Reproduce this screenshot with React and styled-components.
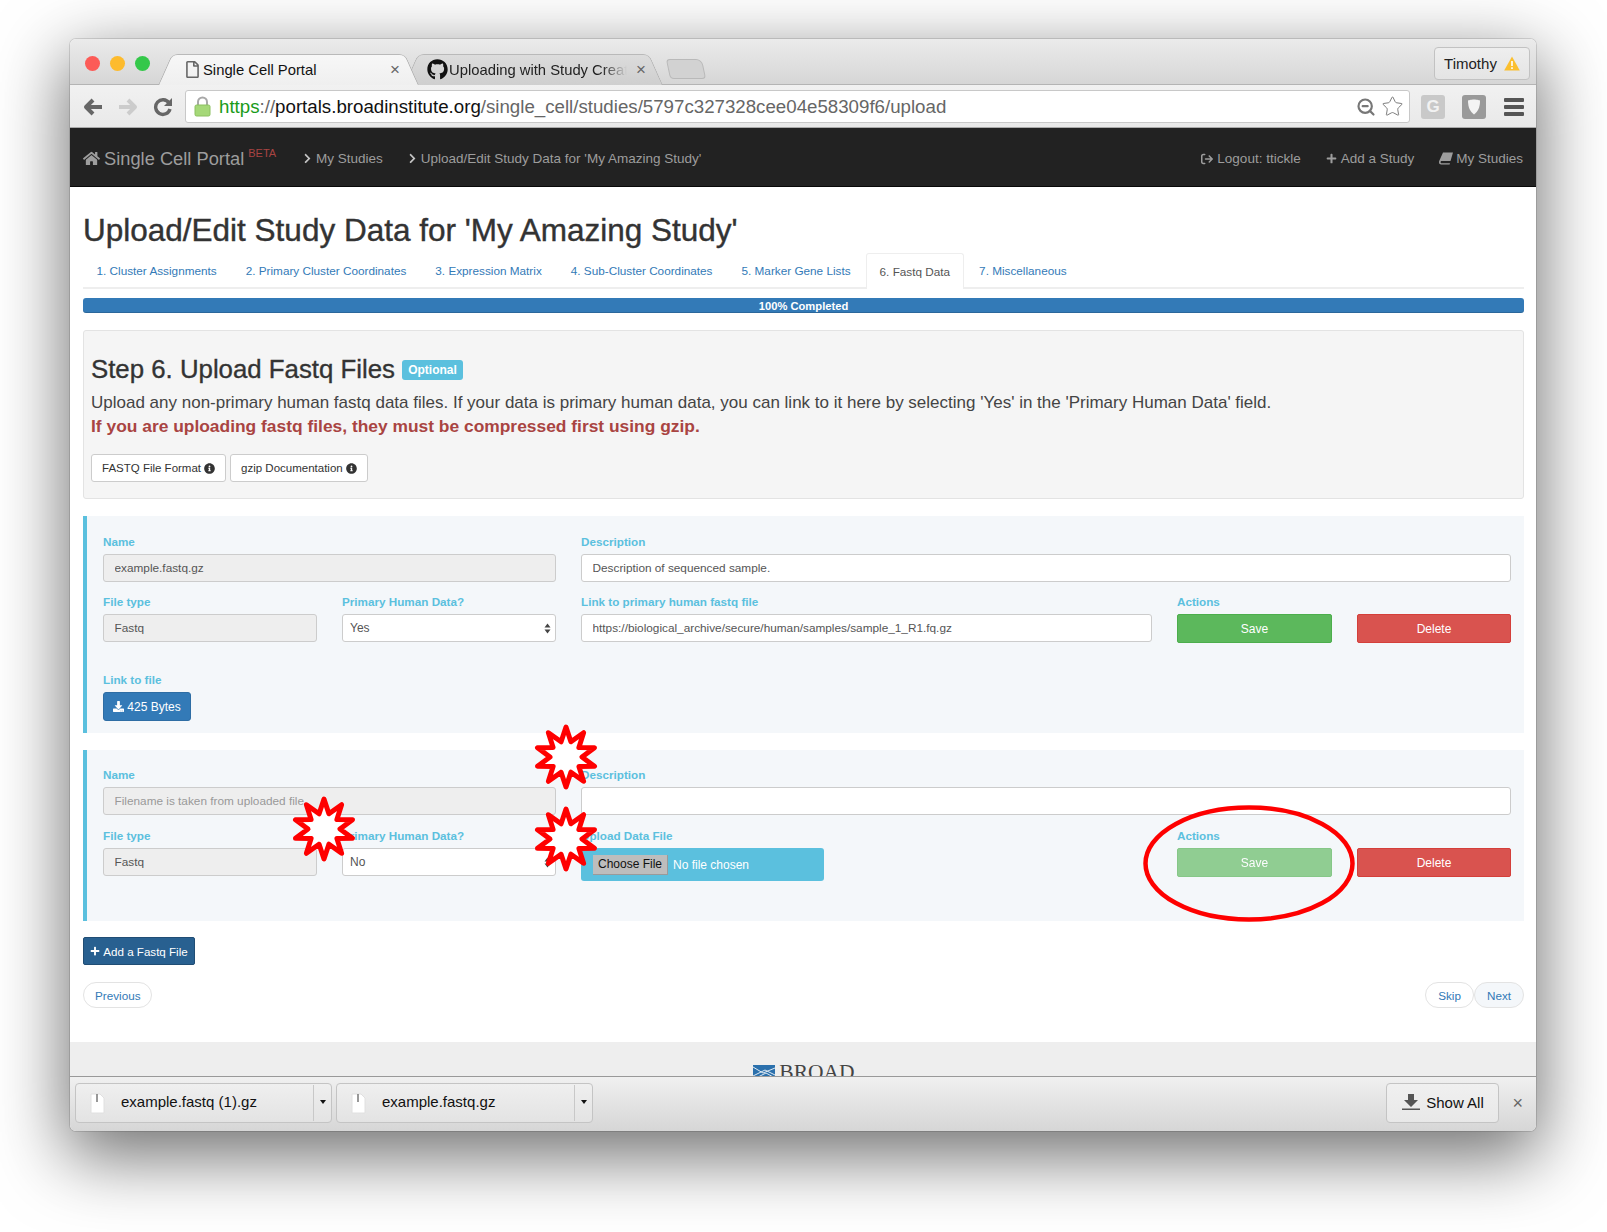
import React from "react";
import styled, { createGlobalStyle } from "styled-components";
import { FaHome, FaChevronRight, FaPlus, FaInfoCircle, FaDownload, FaGithub, FaRegFile } from "react-icons/fa";
import { FaArrowRightFromBracket } from "react-icons/fa6";
import { ZoomOut, Star as StarIcon } from "lucide-react";

const Global = createGlobalStyle`
  html, body { margin: 0; padding: 0; background: #fff; }
  body { font-family: "Liberation Sans", Arial, sans-serif; color: #333; }
  * { box-sizing: border-box; }
`;

const Page = styled.div`
  width: 1607px;
  height: 1232px;
  padding: 39px 71px 0 70px;
  overflow: hidden;
`;

const Window = styled.div`
  height: 1092px;
  display: flex;
  flex-direction: column;
  border-radius: 6px;
  overflow: hidden;
  background: #fff;
  box-shadow: 0 22px 70px 4px rgba(0, 0, 0, 0.56), 0 0 0 1px rgba(0, 0, 0, 0.12);
`;

/* browser chrome */
const TabStrip = styled.div`
  height: 46px;
  flex: none;
  display: flex;
  align-items: flex-end;
  padding: 0 6px 0 15px;
  background: linear-gradient(#ebebeb, #d6d6d6);
  border-bottom: 1px solid #b4b4b4;
`;

const Lights = styled.div`
  display: flex;
  gap: 10px;
  align-self: flex-start;
  margin-top: 17px;
  width: 72px;
`;

const Light = styled.span`
  width: 15px;
  height: 15px;
  flex: none;
  border-radius: 50%;
  background: ${(p) => p.$color};
`;

const BrowserTab = styled.div`
  position: relative;
  width: ${(p) => p.$width}px;
  height: 31px;
  margin-left: ${(p) => p.$left || 0}px;
  margin-bottom: -1px;
  display: flex;
  align-items: center;
  padding-left: ${(p) => p.$pad}px;
  font-size: 14.8px;
  color: ${(p) => (p.$active ? "#111" : "#222")};
  z-index: ${(p) => (p.$active ? 2 : 1)};
  &::before, &::after {
    content: "";
    position: absolute;
    top: 0;
    bottom: 0;
    width: 55%;
    z-index: -1;
    background: ${(p) => (p.$active ? "linear-gradient(#f7f7f7, #efefef)" : "linear-gradient(#dcdcdc, #cfcfcf)")};
    border-top: 1px solid #b9b9b9;
  }
  &::before {
    left: 8px;
    transform: skewX(-24deg);
    border-left: 1px solid #b0b0b0;
    border-top-left-radius: 6px;
  }
  &::after {
    right: 8px;
    transform: skewX(24deg);
    border-right: 1px solid #b0b0b0;
    border-top-right-radius: 6px;
  }
`;

const TabTitle = styled.span`
  white-space: nowrap;
  overflow: hidden;
  width: ${(p) => p.$width}px;
  margin-left: ${(p) => p.$gap}px;
  ${(p) => p.$fade && "-webkit-mask-image: linear-gradient(90deg, #000 86%, transparent 100%);"}
`;

const TabClose = styled.span`
  position: absolute;
  left: ${(p) => p.$x}px;
  top: 6px;
  font-size: 17px;
  color: #666;
`;

const NewTab = styled.div`
  width: 36px;
  height: 20px;
  margin: 0 0 5px 4px;
  background: #d2d2d2;
  border: 1px solid #b9b9b9;
  border-radius: 4px 6px 4px 4px;
  transform: skewX(12deg);
`;

const Profile = styled.div`
  margin-left: auto;
  align-self: flex-start;
  margin-top: 8px;
  width: 96px;
  height: 33px;
  display: flex;
  align-items: center;
  justify-content: center;
  gap: 7px;
  font-size: 15px;
  color: #222;
  background: linear-gradient(#eee, #e4e4e4);
  border: 1px solid #c2c2c2;
  border-radius: 4px;
`;

const Toolbar = styled.div`
  height: 43px;
  flex: none;
  display: flex;
  align-items: center;
  background: linear-gradient(#f1f1f1, #e9e9e9);
  border-bottom: 1px solid #aaa;
  padding: 1px 0 0 13px;
`;

const NavIcons = styled.div`
  width: 102px;
  display: flex;
  align-items: center;
  gap: 15px;
`;

const UrlBox = styled.div`
  width: 1225px;
  height: 33px;
  display: flex;
  align-items: center;
  padding: 0 5px 0 8px;
  background: #fff;
  border: 1px solid #c8c8c8;
  border-radius: 3px;
  font-size: 18.7px;
  white-space: pre;
  color: #666;
`;

const Https = styled.span`
  color: #1a9b1a;
  margin-left: 8px;
`;

const Host = styled.span`
  color: #111;
`;

const UrlIcons = styled.div`
  margin-left: auto;
  display: flex;
  align-items: center;
  gap: 5px;
  color: #777;
`;

const ExtBox = styled.div`
  width: 24px;
  height: 24px;
  margin-left: ${(p) => p.$left}px;
  display: flex;
  align-items: center;
  justify-content: center;
  border-radius: 3px;
  background: ${(p) => p.$bg};
  color: #f2f2f2;
  font-weight: bold;
  font-size: 17px;
`;

const Burger = styled.div`
  width: 20px;
  margin-left: 18px;
  display: flex;
  flex-direction: column;
  gap: 3px;
  span {
    height: 4px;
    border-radius: 1px;
    background: #555;
  }
`;

/* site navbar */
const Navbar = styled.nav`
  height: 59px;
  flex: none;
  display: flex;
  align-items: center;
  padding: 3px 13px 0;
  background: #222;
  border-bottom: 1px solid #080808;
  color: #9d9d9d;
  font-size: 13.5px;
  white-space: nowrap;
`;

const Brand = styled.div`
  display: flex;
  align-items: center;
  font-size: 18.3px;
  gap: 4px;
  width: 220px;
`;

const Beta = styled.sup`
  align-self: flex-start;
  margin: -1px 0 0 0;
  color: #a94442;
  font-size: 11px;
`;

const NavLink = styled.div`
  display: flex;
  align-items: center;
  gap: ${(p) => p.$gap || 4}px;
  margin-left: ${(p) => p.$left || 0}px;
`;

const NavRight = styled.div`
  margin-left: auto;
  display: flex;
  align-items: center;
  gap: 25px;
`;

/* page */
const Main = styled.main`
  flex: 1;
  min-height: 0;
  padding: 0 12px 0 13px;
  position: relative;
`;

const Title = styled.h1`
  height: 66px;
  margin: 0;
  padding-top: 24px;
  font-size: 31.5px;
  line-height: 38px;
  font-weight: 400;
  color: #333;
  -webkit-text-stroke: 0.4px #333;
`;

const Tabs = styled.div`
  height: 36px;
  display: flex;
  border-bottom: 2px solid #eee;
  font-size: 11.75px;
`;

const TabLink = styled.div`
  height: 36px;
  padding: 0 ${(p) => (p.$active ? 12.5 : 13.5)}px;
  margin-right: 2px;
  line-height: 35px;
  color: ${(p) => (p.$active ? "#555" : "#337ab7")};
  ${(p) => p.$active && "background: #fff; border: 1px solid #eee; border-bottom: 0; border-radius: 3px 3px 0 0;"}
`;

const Progress = styled.div`
  height: 15px;
  margin-top: 9px;
  background: #337ab7;
  border-radius: 3px;
  color: #fff;
  font-size: 11.2px;
  line-height: 16px;
  font-weight: bold;
  text-align: center;
  box-shadow: inset 0 -1px 0 rgba(0, 0, 0, 0.15);
`;

const Well = styled.section`
  height: 169px;
  margin-top: 17px;
  padding: 0 7px;
  background: #f5f5f5;
  border: 1px solid #e3e3e3;
  border-radius: 3px;
`;

const StepHead = styled.div`
  display: flex;
  align-items: center;
  gap: 7px;
  padding-top: 22px;
  height: 55px;
`;

const StepTitle = styled.h2`
  margin: 0;
  font-size: 25.8px;
  font-weight: 400;
  -webkit-text-stroke: 0.35px #333;
`;

const Badge = styled.span`
  width: 61px;
  height: 20px;
  margin-top: 1px;
  background: #5bc0de;
  border-radius: 3px;
  color: #fff;
  font-size: 12px;
  font-weight: bold;
  line-height: 20px;
  text-align: center;
`;

const Lead = styled.p`
  margin: 5px 0 0;
  font-size: 17px;
  line-height: 24px;
  color: #444;
`;

const Warn = styled.p`
  margin: 0;
  font-size: 17.4px;
  line-height: 23px;
  font-weight: bold;
  color: #a94442;
`;

const Refs = styled.div`
  display: flex;
  gap: 4px;
  margin-top: 16px;
`;

const RefButton = styled.button`
  height: 28px;
  padding: 0 10px;
  display: flex;
  align-items: center;
  gap: 3px;
  background: #fff;
  border: 1px solid #ccc;
  border-radius: 3px;
  font: 11.5px "Liberation Sans", sans-serif;
  color: #333;
`;

const Panel = styled.section`
  position: relative;
  height: ${(p) => p.$height}px;
  margin-top: ${(p) => p.$top}px;
  padding: ${(p) => p.$pad}px 13px 0 16px;
  background: #f4f7fa;
  border-left: 4px solid #5bc0de;
`;

const FieldGrid = styled.div`
  display: grid;
  grid-template-columns: 214px 214px 571px 155px 154px;
  column-gap: 25px;
  row-gap: ${(p) => p.$rowGap}px;
`;

const Field = styled.div`
  grid-column: span ${(p) => p.$span || 1};
  display: flex;
  flex-direction: column;
`;

const Label = styled.label`
  display: block;
  height: 21px;
  font-size: 11.7px;
  line-height: 18px;
  font-weight: bold;
  color: #5bc0de;
  white-space: nowrap;
`;

const TextInput = styled.input`
  width: 100%;
  height: 28px;
  padding: 0 10.5px;
  border: 1px solid #ccc;
  border-radius: 3px;
  background: ${(p) => (p.readOnly ? "#eee" : "#fff")};
  color: #555;
  font: 11.8px "Liberation Sans", sans-serif;
  outline: none;
  &::placeholder { color: #999; opacity: 1; }
`;

const SelectBox = styled.div`
  height: 28px;
  display: flex;
  align-items: center;
  justify-content: space-between;
  padding: 0 4px 0 7px;
  background: #fff;
  border: 1px solid #ccc;
  border-radius: 3px;
  color: #555;
  font-size: 12px;
`;

const ActionButton = styled.button`
  width: 100%;
  height: 29px;
  border: 1px solid ${(p) => p.$border};
  border-radius: 2px;
  background: ${(p) => p.$bg};
  color: #fff;
  font: 12px "Liberation Sans", sans-serif;
  opacity: ${(p) => (p.disabled ? 0.65 : 1)};
`;

const FileLink = styled.div`
  margin-top: 17px;
  grid-column: span 5;
`;

const DownloadButton = styled.button`
  width: 88px;
  height: 29px;
  display: flex;
  align-items: center;
  justify-content: center;
  gap: 3px;
  background: #337ab7;
  border: 1px solid #2e6da4;
  border-radius: 3px;
  color: #fff;
  font: 12px "Liberation Sans", sans-serif;
`;

const UploadBox = styled.div`
  width: 243px;
  height: 33px;
  display: flex;
  align-items: center;
  padding-left: 12px;
  gap: 5px;
  background: #5bc0de;
  border-radius: 3px;
  color: #fff;
  font-size: 12px;
`;

const ChooseFile = styled.button`
  width: 75px;
  height: 20px;
  padding: 0;
  background: #bdbdbd;
  border: 1px solid #9a9a9a;
  border-width: 0 1px 1px 0;
  font: 12px "Liberation Sans", sans-serif;
  color: #111;
`;

const AddButton = styled.button`
  width: 112px;
  height: 28px;
  margin-top: 16px;
  padding: 0;
  display: flex;
  align-items: center;
  justify-content: center;
  gap: 3px;
  white-space: nowrap;
  background: #286090;
  border: 1px solid #204d74;
  border-radius: 2px;
  color: #fff;
  font: 11.6px "Liberation Sans", sans-serif;
`;

const Pager = styled.div`
  display: flex;
  margin-top: 17px;
`;

const Pill = styled.button`
  height: 26px;
  padding: 0 ${(p) => p.$pad || 12}px;
  margin-left: ${(p) => (p.$push ? "auto" : 0)};
  background: ${(p) => p.$bg || "#fff"};
  border: 1px solid #e3e3e3;
  border-radius: 13px;
  color: #337ab7;
  font: 11.7px "Liberation Sans", sans-serif;
`;

const Footer = styled.footer`
  height: 34px;
  flex: none;
  overflow: hidden;
  display: flex;
  justify-content: center;
  align-items: flex-start;
  gap: 4px;
  padding: 18px 0 0 2px;
  background: #eee;
`;

const BroadText = styled.span`
  font-family: "Liberation Serif", serif;
  font-size: 21.5px;
  line-height: 24px;
  color: #444;
`;

const Shelf = styled.div`
  height: 55px;
  flex: none;
  display: flex;
  align-items: center;
  padding: 0 13px 2px 5px;
  gap: 4px;
  background: linear-gradient(#f0f0f0, #d6d6d6);
  border-top: 1px solid #999;
`;

const DownloadItem = styled.div`
  width: 257px;
  height: 40px;
  display: flex;
  align-items: center;
  padding: 0 0 0 14px;
  background: linear-gradient(#efefef, #e3e3e3);
  border: 1px solid #c4c4c4;
  border-radius: 4px;
  font-size: 15px;
  color: #111;
`;

const ItemName = styled.span`
  margin: 0 0 3px 16px;
  flex: 1;
`;

const Caret = styled.span`
  width: 18px;
  height: 36px;
  display: flex;
  align-items: center;
  justify-content: center;
  border-left: 1px solid #c8c8c8;
  &::after {
    content: "";
    border: 3px solid transparent;
    border-top: 4px solid #111;
    margin-top: 1px;
  }
`;

const ShowAll = styled.button`
  margin-left: auto;
  width: 113px;
  height: 40px;
  padding: 0 0 2px;
  display: flex;
  align-items: center;
  justify-content: center;
  gap: 6px;
  background: linear-gradient(#f0f0f0, #e8e8e8);
  border: 1px solid #c4c4c4;
  border-radius: 4px;
  font: 15px "Liberation Sans", sans-serif;
  color: #111;
`;

const ShelfClose = styled.span`
  margin: 0 0 0 9px;
  font-size: 18px;
  color: #666;
`;

/* markup drawn over the screenshot */
const Markup = styled.svg`
  position: absolute;
  left: ${(p) => p.$x}px;
  top: ${(p) => p.$y}px;
  overflow: visible;
  z-index: 5;
`;

const starPoints = (r, inner, n = 10) =>
  Array.from({ length: n * 2 }, (_, i) => {
    const a = (Math.PI * i) / n - Math.PI / 2;
    const d = i % 2 ? inner : r;
    return `${(r + d * Math.cos(a)).toFixed(1)},${(r + d * Math.sin(a)).toFixed(1)}`;
  }).join(" ");

// x, y are relative to the main content box
const Burst = ({ x, y }) => (
  <Markup $x={x - 30} $y={y - 30} width="60" height="60" viewBox="0 0 60 60">
    <polygon points={starPoints(30, 16)} fill="#fff" stroke="#fe0000" strokeWidth="5" strokeLinejoin="round" />
  </Markup>
);

const SortArrows = () => (
  <svg width="7" height="11" viewBox="0 0 7 11"><path d="M3.5 0.5 6.5 4.5H.5zM3.5 10.5.5 6.5h6z" fill="#444" /></svg>
);

const FileGlyph = () => (
  <svg width="15" height="21" viewBox="0 0 15 21">
    <path d="M1 1h9l4 4v15H1z" fill="#fff" stroke="#e0e0e0" />
    <path d="M7 1v8" stroke="#777" strokeWidth="1.5" />
  </svg>
);

const Lock = () => (
  <svg width="17" height="21" viewBox="0 0 17 21">
    <path d="M4 10V6a4.5 4.5 0 0 1 9 0v4" fill="none" stroke="#a8a8a8" strokeWidth="2" />
    <rect x="1" y="9" width="15" height="11" rx="1.5" fill="#a5d878" stroke="#8cc060" />
  </svg>
);

const Arrow = ({ color, flip }) => (
  <svg width="20" height="18" viewBox="0 0 20 18" style={flip ? { transform: "scaleX(-1)" } : undefined}>
    <path d="M10 2 3 9l7 7M3 9h16" fill="none" stroke={color} strokeWidth="4" strokeLinejoin="round" />
  </svg>
);

const Reload = () => (
  <svg width="20" height="20" viewBox="0 0 20 20">
    <path d="M16 6a7.3 7.3 0 1 0 1 6" fill="none" stroke="#666" strokeWidth="3.4" />
    <path d="M19 1v8h-8z" fill="#666" />
  </svg>
);

const WarnTriangle = () => (
  <svg width="16" height="15" viewBox="0 0 16 15">
    <path d="M8 .5 15.8 14.5H.2z" fill="#fbbf2e" />
    <path d="M8 5v5M8 11.2v1.8" stroke="#fff" strokeWidth="1.6" />
  </svg>
);

// slanted book, as the glyphicon draws it
const SlantBook = () => (
  <svg width="14" height="13" viewBox="0 0 14 13">
    <path d="M4 .5h10L11.5 9H2.8C2 9 1.6 9.6 1.6 10.2s.4 1 1.2 1H11l-.4 1.3H2.2C.9 12.5 0 11.5 0 10.2c0-.5.1-.9.2-1.3z" fill="#9d9d9d" />
  </svg>
);

const BroadLogo = () => (
  <svg width="22" height="13" viewBox="0 0 22 13" style={{ marginTop: 5 }}>
    <rect width="22" height="13" fill="#2b70ac" />
    <path d="M0 2 10 8 22 3M0 11 12 5 22 10M3 13 13 8 22 13" fill="none" stroke="#dfe9f2" strokeWidth="1" />
  </svg>
);

const wizardTabs = [
  "1. Cluster Assignments",
  "2. Primary Cluster Coordinates",
  "3. Expression Matrix",
  "4. Sub-Cluster Coordinates",
  "5. Marker Gene Lists",
  "6. Fastq Data",
  "7. Miscellaneous",
];

export default function App() {
  return (
    <Page>
      <Global />
      <Window>
        <TabStrip>
          <Lights>
            <Light $color="#fc5b57" />
            <Light $color="#fdbb2d" />
            <Light $color="#34c84a" />
          </Lights>
          <BrowserTab $active $width={263} $pad={27}>
            <FaRegFile size={17} color="#666" />
            <TabTitle $width={150} $gap={2}>Single Cell Portal</TabTitle>
            <TabClose $x={233}>×</TabClose>
          </BrowserTab>
          <BrowserTab $width={261} $left={-17} $pad={24}>
            <FaGithub size={21} color="#111" />
            <TabTitle $width={178} $gap={1} $fade>Uploading with Study Creation</TabTitle>
            <TabClose $x={233}>×</TabClose>
          </BrowserTab>
          <NewTab />
          <Profile>Timothy <WarnTriangle /></Profile>
        </TabStrip>
        <Toolbar>
          <NavIcons>
            <Arrow color="#666" />
            <Arrow color="#ccc" flip />
            <Reload />
          </NavIcons>
          <UrlBox>
            <Lock />
            <Https>https</Https>://<Host>portals.broadinstitute.org</Host>/single_cell/studies/5797c327328cee04e58309f6/upload
            <UrlIcons>
              <ZoomOut size={20} strokeWidth={2.6} />
              <StarIcon size={23} strokeWidth={1} />
            </UrlIcons>
          </UrlBox>
          <ExtBox $left={11} $bg="#c9c9c9">G</ExtBox>
          <ExtBox $left={17} $bg="#9a9a9a">
            <svg width="14" height="16" viewBox="0 0 14 16"><path d="M7 .5c3 0 6 1 6 1 0 7-2 11-6 14-4-3-6-7-6-14 0 0 3-1 6-1z" fill="#f4f4f4" /></svg>
          </ExtBox>
          <Burger><span /><span /><span /></Burger>
        </Toolbar>
        <Navbar>
          <Brand><FaHome size={17} />Single Cell Portal<Beta>BETA</Beta></Brand>
          <NavLink $gap={3} $left={-1}><FaChevronRight size={11} color="#c4c4c4" />My Studies</NavLink>
          <NavLink $gap={3} $left={24}><FaChevronRight size={11} color="#c4c4c4" />Upload/Edit Study Data for 'My Amazing Study'</NavLink>
          <NavRight>
            <NavLink><FaArrowRightFromBracket size={12} />Logout: ttickle</NavLink>
            <NavLink><FaPlus size={11} />Add a Study</NavLink>
            <NavLink $gap={3}><SlantBook />My Studies</NavLink>
          </NavRight>
        </Navbar>
        <Main>
          <Title>Upload/Edit Study Data for 'My Amazing Study'</Title>
          <Tabs>
            {wizardTabs.map((t) => (
              <TabLink key={t} $active={t.startsWith("6")}>{t}</TabLink>
            ))}
          </Tabs>
          <Progress>100% Completed</Progress>
          <Well>
            <StepHead>
              <StepTitle>Step 6. Upload Fastq Files</StepTitle>
              <Badge>Optional</Badge>
            </StepHead>
            <Lead>Upload any non-primary human fastq data files. If your data is primary human data, you can link to it here by selecting 'Yes' in the 'Primary Human Data' field.</Lead>
            <Warn>If you are uploading fastq files, they must be compressed first using gzip.</Warn>
            <Refs>
              <RefButton>FASTQ File Format <FaInfoCircle size={11} /></RefButton>
              <RefButton>gzip Documentation <FaInfoCircle size={11} /></RefButton>
            </Refs>
          </Well>

          <Panel $height={217} $top={17} $pad={17}>
            <FieldGrid $rowGap={11}>
              <Field $span={2}><Label>Name</Label><TextInput readOnly defaultValue="example.fastq.gz" /></Field>
              <Field $span={3}><Label>Description</Label><TextInput defaultValue="Description of sequenced sample." /></Field>
              <Field><Label>File type</Label><TextInput readOnly defaultValue="Fastq" /></Field>
              <Field><Label>Primary Human Data?</Label><SelectBox>Yes <SortArrows /></SelectBox></Field>
              <Field><Label>Link to primary human fastq file</Label><TextInput defaultValue="https://biological_archive/secure/human/samples/sample_1_R1.fq.gz" /></Field>
              <Field><Label>Actions</Label><ActionButton $bg="#5cb85c" $border="#4cae4c">Save</ActionButton></Field>
              <Field><Label>&nbsp;</Label><ActionButton $bg="#d9534f" $border="#d43f3a">Delete</ActionButton></Field>
              <FileLink>
                <Label>Link to file</Label>
                <DownloadButton><FaDownload size={11} /> 425 Bytes</DownloadButton>
              </FileLink>
            </FieldGrid>
          </Panel>

          <Panel $height={171} $top={17} $pad={16}>
            <FieldGrid $rowGap={12}>
              <Field $span={2}><Label>Name</Label><TextInput readOnly placeholder="Filename is taken from uploaded file" /></Field>
              <Field $span={3}><Label>Description</Label><TextInput /></Field>
              <Field><Label>File type</Label><TextInput readOnly defaultValue="Fastq" /></Field>
              <Field><Label>Primary Human Data?</Label><SelectBox>No <SortArrows /></SelectBox></Field>
              <Field><Label>Upload Data File</Label><UploadBox><ChooseFile>Choose File</ChooseFile>No file chosen</UploadBox></Field>
              <Field><Label>Actions</Label><ActionButton disabled $bg="#5cb85c" $border="#4cae4c">Save</ActionButton></Field>
              <Field><Label>&nbsp;</Label><ActionButton $bg="#d9534f" $border="#d43f3a">Delete</ActionButton></Field>
            </FieldGrid>
          </Panel>

          <AddButton><FaPlus size={10} /> Add a Fastq File</AddButton>
          <Pager>
            <Pill $pad={11}>Previous</Pill>
            <Pill $push>Skip</Pill>
            <Pill $bg="#f4f7fa">Next</Pill>
          </Pager>

          <Burst x={496} y={570} />
          <Burst x={254} y={642} />
          <Burst x={496} y={652} />
          <Markup $x={1074} $y={620} width="212" height="115" viewBox="0 0 212 115">
            <ellipse cx="105" cy="56.5" rx="103.5" ry="56" fill="none" stroke="#fe0000" strokeWidth="4.5" />
          </Markup>
        </Main>
        <Footer><BroadLogo /><BroadText>BROAD</BroadText></Footer>
        <Shelf>
          <DownloadItem><FileGlyph /><ItemName>example.fastq (1).gz</ItemName><Caret /></DownloadItem>
          <DownloadItem><FileGlyph /><ItemName>example.fastq.gz</ItemName><Caret /></DownloadItem>
          <ShowAll>
            <svg width="18" height="16" viewBox="0 0 18 16"><path d="M6 0h6v6h4l-7 7-7-7h4zM0 14.5h18V16H0z" fill="#555" /></svg>
            Show All
          </ShowAll>
          <ShelfClose>×</ShelfClose>
        </Shelf>
      </Window>
    </Page>
  );
}
